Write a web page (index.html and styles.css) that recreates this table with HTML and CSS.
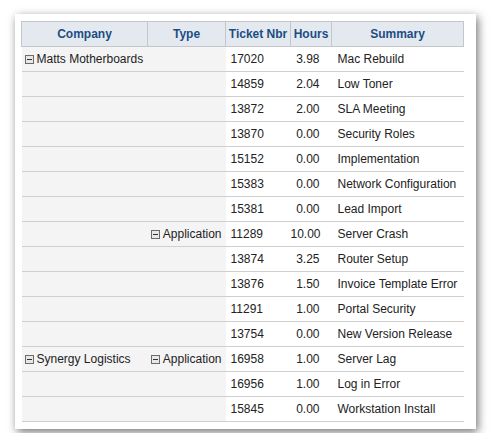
FILE: index.html
```html
<!DOCTYPE html>
<html lang="en">

<head>
    <meta charset="UTF-8">
    <title>Tickets</title>
    <link rel="stylesheet" href="styles.css">
</head>

<body>
    <div class="panel">
        <table class="grid">
            <colgroup>
                <col class="col-company">
                <col class="col-type">
                <col class="col-ticket">
                <col class="col-hours">
                <col class="col-summary">
            </colgroup>
            <thead>
                <tr>
                    <th>Company</th>
                    <th>Type</th>
                    <th>Ticket Nbr</th>
                    <th>Hours</th>
                    <th>Summary</th>
                </tr>
            </thead>
            <tbody>
                <tr>
                    <td class="group company"><span class="toggle"></span>Matts Motherboards</td>
                    <td class="group type"></td>
                    <td class="ticket">17020</td>
                    <td class="hours">3.98</td>
                    <td class="summary">Mac Rebuild</td>
                </tr>
                <tr>
                    <td class="group company"></td>
                    <td class="group type"></td>
                    <td class="ticket">14859</td>
                    <td class="hours">2.04</td>
                    <td class="summary">Low Toner</td>
                </tr>
                <tr>
                    <td class="group company"></td>
                    <td class="group type"></td>
                    <td class="ticket">13872</td>
                    <td class="hours">2.00</td>
                    <td class="summary">SLA Meeting</td>
                </tr>
                <tr>
                    <td class="group company"></td>
                    <td class="group type"></td>
                    <td class="ticket">13870</td>
                    <td class="hours">0.00</td>
                    <td class="summary">Security Roles</td>
                </tr>
                <tr>
                    <td class="group company"></td>
                    <td class="group type"></td>
                    <td class="ticket">15152</td>
                    <td class="hours">0.00</td>
                    <td class="summary">Implementation</td>
                </tr>
                <tr>
                    <td class="group company"></td>
                    <td class="group type"></td>
                    <td class="ticket">15383</td>
                    <td class="hours">0.00</td>
                    <td class="summary">Network Configuration</td>
                </tr>
                <tr>
                    <td class="group company"></td>
                    <td class="group type"></td>
                    <td class="ticket">15381</td>
                    <td class="hours">0.00</td>
                    <td class="summary">Lead Import</td>
                </tr>
                <tr>
                    <td class="group company"></td>
                    <td class="group type"><span class="toggle"></span>Application</td>
                    <td class="ticket">11289</td>
                    <td class="hours">10.00</td>
                    <td class="summary">Server Crash</td>
                </tr>
                <tr>
                    <td class="group company"></td>
                    <td class="group type"></td>
                    <td class="ticket">13874</td>
                    <td class="hours">3.25</td>
                    <td class="summary">Router Setup</td>
                </tr>
                <tr>
                    <td class="group company"></td>
                    <td class="group type"></td>
                    <td class="ticket">13876</td>
                    <td class="hours">1.50</td>
                    <td class="summary">Invoice Template Error</td>
                </tr>
                <tr>
                    <td class="group company"></td>
                    <td class="group type"></td>
                    <td class="ticket">11291</td>
                    <td class="hours">1.00</td>
                    <td class="summary">Portal Security</td>
                </tr>
                <tr>
                    <td class="group company"></td>
                    <td class="group type"></td>
                    <td class="ticket">13754</td>
                    <td class="hours">0.00</td>
                    <td class="summary">New Version Release</td>
                </tr>
                <tr>
                    <td class="group company"><span class="toggle"></span>Synergy Logistics</td>
                    <td class="group type"><span class="toggle"></span>Application</td>
                    <td class="ticket">16958</td>
                    <td class="hours">1.00</td>
                    <td class="summary">Server Lag</td>
                </tr>
                <tr>
                    <td class="group company"></td>
                    <td class="group type"></td>
                    <td class="ticket">16956</td>
                    <td class="hours">1.00</td>
                    <td class="summary">Log in Error</td>
                </tr>
                <tr>
                    <td class="group company"></td>
                    <td class="group type"></td>
                    <td class="ticket">15845</td>
                    <td class="hours">0.00</td>
                    <td class="summary">Workstation Install</td>
                </tr>
            </tbody>
        </table>
    </div>
</body>

</html>
```

FILE: styles.css
```css
* {
    font-family: "Liberation Sans", Arial, sans-serif;
}

*,
*::before,
*::after {
    box-sizing: border-box;
}

body {
    margin: 0;
    background-color: white;
}

.panel {
    display: inline-block;
    margin: 14px 0 0 15px;
    width: 461px;
    height: 415px;
    padding: 7px 13px 8px 6px;
    background-color: white;
    box-shadow: 2px 3px 9px rgba(0, 0, 0, 0.55);
}

table.grid {
    width: 442px;
    table-layout: fixed;
    border-collapse: collapse;
    font-size: 12px;
    color: #222;
}

.col-company {
    width: 126px;
}

.col-type {
    width: 78px;
}

.col-ticket {
    width: 65px;
}

.col-hours {
    width: 41px;
}

.col-summary {
    width: 132px;
}

.grid th {
    height: 25px;
    padding: 0;
    background-color: #e4e9f0;
    border: 1px solid #c3c7cc;
    color: #1b4d84;
    font-weight: bold;
    text-align: center;
    white-space: nowrap;
}

.grid td {
    height: 25px;
    padding: 0;
    border-bottom: 1px solid #cfcfcf;
    white-space: nowrap;
    overflow: hidden;
}

.grid td.group {
    background-color: #f4f4f4;
}

td.company {
    padding-left: 3px;
}

td.type {
    text-align: right;
    padding-right: 4px;
}

td.ticket {
    padding-left: 5px;
}

td.hours {
    text-align: right;
    padding-right: 12px;
}

td.summary {
    padding-left: 6px;
}

.toggle {
    display: inline-block;
    position: relative;
    width: 9px;
    height: 9px;
    margin-right: 3px;
    vertical-align: -1px;
    border: 1px solid #6b6b6b;
    background-color: #e8e8e8;
}

.toggle::after {
    position: absolute;
    content: "";
    left: 1px;
    top: 3px;
    width: 5px;
    height: 1px;
    background-color: #333;
}
```
